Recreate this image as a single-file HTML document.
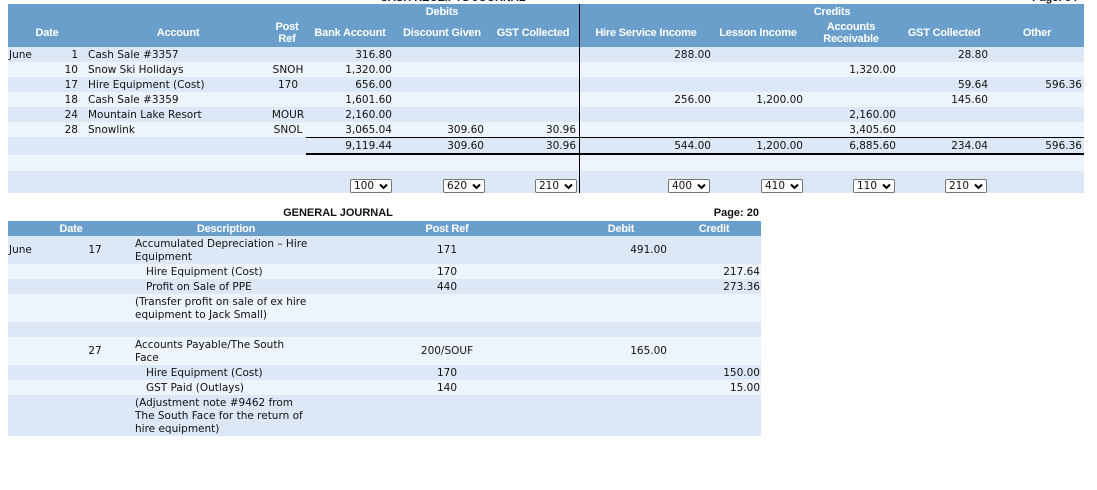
<!DOCTYPE html>
<html><head><meta charset="utf-8"><style>
body{margin:0;width:1097px;height:490px;background:#fff;position:relative;overflow:hidden;font-family:"DejaVu Sans","Liberation Sans",sans-serif;font-size:10.5px;color:#111}
div{position:absolute;white-space:nowrap}
.bg{left:8px}
.d{background:#dde8f6}.l{background:#eef4fc}
.h{background:#6a9fcb}
.hd{color:#fff;font-family:"Liberation Sans",sans-serif;font-weight:bold;font-size:11px;text-align:center;line-height:12px;transform:translateX(-50%);letter-spacing:-0.2px}
.r{text-align:right;transform:translateX(-100%)}
.c{transform:translateX(-50%);text-align:center}
.sel{border:1px solid #767676;border-radius:2px;background:#fff;height:14px;line-height:13px;font-size:10.5px;padding-left:3px;box-sizing:border-box}
.sel svg{position:absolute;right:3px;top:3px}
.t{font-family:"Liberation Sans",sans-serif;font-weight:bold;font-size:11px}
.tx{margin-top:1px}
</style></head><body>
<div class="t" style="left:380px;top:-8px;">CASH RECEIPTS JOURNAL</div>
<div class="t" style="left:1032px;top:-8px;">Page: 34</div>
<div class="bg h" style="top:4px;width:1076px;height:43px"></div>
<div class="bg d" style="top:47px;width:1076px;height:15px"></div>
<div class="bg l" style="top:62px;width:1076px;height:15px"></div>
<div class="bg d" style="top:77px;width:1076px;height:15px"></div>
<div class="bg l" style="top:92px;width:1076px;height:15px"></div>
<div class="bg d" style="top:107px;width:1076px;height:15px"></div>
<div class="bg l" style="top:122px;width:1076px;height:15px"></div>
<div class="bg d" style="top:137px;width:1076px;height:18px"></div>
<div class="bg l" style="top:155px;width:1076px;height:16px"></div>
<div class="bg d" style="top:171px;width:1076px;height:22px"></div>
<div style="left:579px;top:4px;width:1px;height:189px;background:#000"></div>
<div style="left:306px;top:137px;width:778px;height:1px;background:#000"></div>
<div style="left:306px;top:153px;width:778px;height:2px;background:#000"></div>
<div class="hd" style="left:442px;top:6px">Debits</div>
<div class="hd" style="left:832px;top:6px">Credits</div>
<div class="hd" style="left:47px;top:27px">Date</div>
<div class="hd" style="left:178px;top:27px">Account</div>
<div class="hd" style="left:287px;top:21px">Post<br>Ref</div>
<div class="hd" style="left:350px;top:27px">Bank Account</div>
<div class="hd" style="left:442px;top:27px">Discount Given</div>
<div class="hd" style="left:533px;top:27px">GST Collected</div>
<div class="hd" style="left:646px;top:27px">Hire Service Income</div>
<div class="hd" style="left:758px;top:27px">Lesson Income</div>
<div class="hd" style="left:851px;top:21px">Accounts<br>Receivable</div>
<div class="hd" style="left:944px;top:27px">GST Collected</div>
<div class="hd" style="left:1037px;top:27px">Other</div>
<div style="left:9px;top:49px">June</div>
<div class="r" style="left:78px;top:49px">1</div><div style="left:88px;top:49px">Cash Sale #3357</div>
<div class="r" style="left:78px;top:64px">10</div><div style="left:88px;top:64px">Snow Ski Holidays</div>
<div class="r" style="left:78px;top:79px">17</div><div style="left:88px;top:79px">Hire Equipment (Cost)</div>
<div class="r" style="left:78px;top:94px">18</div><div style="left:88px;top:94px">Cash Sale #3359</div>
<div class="r" style="left:78px;top:109px">24</div><div style="left:88px;top:109px">Mountain Lake Resort</div>
<div class="r" style="left:78px;top:124px">28</div><div style="left:88px;top:124px">Snowlink</div>
<div class="c" style="left:288px;top:64px">SNOH</div>
<div class="c" style="left:288px;top:79px">170</div>
<div class="c" style="left:288px;top:109px">MOUR</div>
<div class="c" style="left:288px;top:124px">SNOL</div>
<div class="r" style="left:392px;top:49px">316.80</div>
<div class="r" style="left:392px;top:64px">1,320.00</div>
<div class="r" style="left:392px;top:79px">656.00</div>
<div class="r" style="left:392px;top:94px">1,601.60</div>
<div class="r" style="left:392px;top:109px">2,160.00</div>
<div class="r" style="left:392px;top:124px">3,065.04</div>
<div class="r" style="left:392px;top:140px">9,119.44</div>
<div class="r" style="left:484px;top:124px">309.60</div>
<div class="r" style="left:484px;top:140px">309.60</div>
<div class="r" style="left:576px;top:124px">30.96</div>
<div class="r" style="left:576px;top:140px">30.96</div>
<div class="r" style="left:711px;top:49px">288.00</div>
<div class="r" style="left:711px;top:94px">256.00</div>
<div class="r" style="left:711px;top:140px">544.00</div>
<div class="r" style="left:803px;top:94px">1,200.00</div>
<div class="r" style="left:803px;top:140px">1,200.00</div>
<div class="r" style="left:896px;top:64px">1,320.00</div>
<div class="r" style="left:896px;top:109px">2,160.00</div>
<div class="r" style="left:896px;top:124px">3,405.60</div>
<div class="r" style="left:896px;top:140px">6,885.60</div>
<div class="r" style="left:988px;top:49px">28.80</div>
<div class="r" style="left:988px;top:79px">59.64</div>
<div class="r" style="left:988px;top:94px">145.60</div>
<div class="r" style="left:988px;top:140px">234.04</div>
<div class="r" style="left:1082px;top:79px">596.36</div>
<div class="r" style="left:1082px;top:140px">596.36</div>
<div class="sel" style="left:350px;top:179px;width:42px">100<svg width="9" height="7" viewBox="0 0 9 7"><path d="M1 1.5L4.5 5L8 1.5" fill="none" stroke="#000" stroke-width="2"/></svg></div>
<div class="sel" style="left:443px;top:179px;width:42px">620<svg width="9" height="7" viewBox="0 0 9 7"><path d="M1 1.5L4.5 5L8 1.5" fill="none" stroke="#000" stroke-width="2"/></svg></div>
<div class="sel" style="left:535px;top:179px;width:42px">210<svg width="9" height="7" viewBox="0 0 9 7"><path d="M1 1.5L4.5 5L8 1.5" fill="none" stroke="#000" stroke-width="2"/></svg></div>
<div class="sel" style="left:668px;top:179px;width:42px">400<svg width="9" height="7" viewBox="0 0 9 7"><path d="M1 1.5L4.5 5L8 1.5" fill="none" stroke="#000" stroke-width="2"/></svg></div>
<div class="sel" style="left:761px;top:179px;width:42px">410<svg width="9" height="7" viewBox="0 0 9 7"><path d="M1 1.5L4.5 5L8 1.5" fill="none" stroke="#000" stroke-width="2"/></svg></div>
<div class="sel" style="left:853px;top:179px;width:42px">110<svg width="9" height="7" viewBox="0 0 9 7"><path d="M1 1.5L4.5 5L8 1.5" fill="none" stroke="#000" stroke-width="2"/></svg></div>
<div class="sel" style="left:945px;top:179px;width:42px">210<svg width="9" height="7" viewBox="0 0 9 7"><path d="M1 1.5L4.5 5L8 1.5" fill="none" stroke="#000" stroke-width="2"/></svg></div>
<div class="t c" style="left:338px;top:207px">GENERAL JOURNAL</div>
<div class="t r" style="left:759px;top:207px">Page: 20</div>
<div class="bg h" style="top:221px;width:753px;height:15px"></div>
<div class="bg d" style="top:236px;width:753px;height:28px"></div>
<div class="bg l" style="top:264px;width:753px;height:15px"></div>
<div class="bg d" style="top:279px;width:753px;height:15px"></div>
<div class="bg l" style="top:294px;width:753px;height:28px"></div>
<div class="bg d" style="top:322px;width:753px;height:15px"></div>
<div class="bg l" style="top:337px;width:753px;height:28px"></div>
<div class="bg d" style="top:365px;width:753px;height:15px"></div>
<div class="bg l" style="top:380px;width:753px;height:15px"></div>
<div class="bg d" style="top:395px;width:753px;height:41px"></div>
<div class="hd" style="left:71px;top:223px">Date</div>
<div class="hd" style="left:226px;top:223px">Description</div>
<div class="hd" style="left:447px;top:223px">Post Ref</div>
<div class="hd" style="left:621px;top:223px">Debit</div>
<div class="hd" style="left:714px;top:223px">Credit</div>
<div style="left:9px;top:244px">June</div>
<div class="c" style="left:95px;top:244px">17</div>
<div style="left:135px;top:238px;line-height:13px">Accumulated Depreciation – Hire<br>Equipment</div>
<div class="c" style="left:447px;top:244px">171</div>
<div class="r" style="left:667px;top:244px">491.00</div>
<div style="left:146px;top:266px">Hire Equipment (Cost)</div>
<div class="c" style="left:447px;top:266px">170</div>
<div class="r" style="left:760px;top:266px">217.64</div>
<div style="left:146px;top:281px">Profit on Sale of PPE</div>
<div class="c" style="left:447px;top:281px">440</div>
<div class="r" style="left:760px;top:281px">273.36</div>
<div style="left:135px;top:296px;line-height:13px">(Transfer profit on sale of ex hire<br>equipment to Jack Small)</div>
<div class="c" style="left:95px;top:345px">27</div>
<div style="left:135px;top:339px;line-height:13px">Accounts Payable/The South<br>Face</div>
<div class="c" style="left:447px;top:345px">200/SOUF</div>
<div class="r" style="left:667px;top:345px">165.00</div>
<div style="left:146px;top:367px">Hire Equipment (Cost)</div>
<div class="c" style="left:447px;top:367px">170</div>
<div class="r" style="left:760px;top:367px">150.00</div>
<div style="left:146px;top:382px">GST Paid (Outlays)</div>
<div class="c" style="left:447px;top:382px">140</div>
<div class="r" style="left:760px;top:382px">15.00</div>
<div style="left:135px;top:397px;line-height:13px">(Adjustment note #9462 from<br>The South Face for the return of<br>hire equipment)</div>
</body></html>
